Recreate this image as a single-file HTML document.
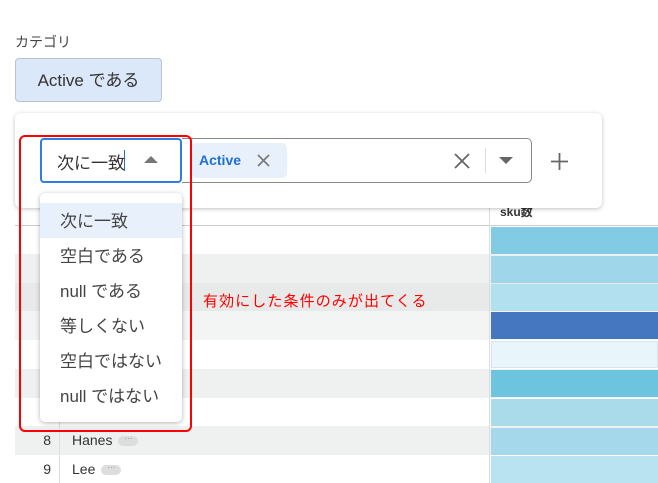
<!DOCTYPE html>
<html><head><meta charset="utf-8">
<style>
*{box-sizing:border-box;margin:0;padding:0}
body{width:658px;height:483px;overflow:hidden;background:#fff;font-family:"Liberation Sans","Noto Sans CJK JP",sans-serif;color:#333;position:relative}
.a{position:absolute}
.row{position:absolute;left:15px;width:643px;height:29px}
.bar{position:absolute;left:491px;width:167px;height:27px}
.num{position:absolute;left:15px;width:36px;text-align:right;font-size:14px;color:#333}
.nm{position:absolute;left:72px;font-size:14px;color:#333}
.pill{display:inline-block;width:20px;height:10px;border-radius:5px;background:#ddd;vertical-align:middle;margin-left:6px;font-size:8px;line-height:6px;text-align:center;color:#888}
.item{position:absolute;left:60px;font-size:17px;color:#444}
</style></head><body>
<div class="a" style="left:15px;top:32px;font-size:14px;color:#444">カテゴリ</div>
<div class="a" style="left:15px;top:58px;width:147px;height:44px;background:#dbe8fa;border:1px solid #b7c3d3;border-radius:4px;font-size:17px;color:#333;line-height:44px;text-align:center">Active である</div>

<!-- table -->
<div class="a" style="left:15px;top:200px;width:643px;height:26px;border-bottom:1px solid #ccc"></div>
<div class="a" style="left:500px;top:203px;font-size:12px;color:#333;font-weight:bold">sku数</div>
<div class="row" style="top:254px;background:#eff0f0"></div>
<div class="row" style="top:283px;background:#e8e9e9"></div>
<div class="row" style="top:311px;background:#f3f4f4"></div>
<div class="row" style="top:369px;background:#eff0f0"></div>
<div class="row" style="top:426px;background:#eff0f0"></div>
<div class="a" style="left:59px;top:226px;width:1px;height:257px;background:#ddd"></div>
<div class="a" style="left:489px;top:200px;width:1px;height:283px;background:#ddd"></div>
<div class="bar" style="top:227px;background:#82cbe4"></div>
<div class="bar" style="top:256px;background:#9fd6e9"></div>
<div class="bar" style="top:284px;background:#b2e0ee"></div>
<div class="bar" style="top:312px;background:#4477c0"></div>
<div class="bar" style="top:341px;background:#e8f5fb;border:1px solid #d5e6ee"></div>
<div class="bar" style="top:370px;background:#6cc4de"></div>
<div class="bar" style="top:399px;background:#aadbeb"></div>
<div class="bar" style="top:428px;background:#a4d8ea"></div>
<div class="bar" style="top:456px;background:#b9e3f0;height:27px"></div>
<div class="num" style="top:432px">8</div>
<div class="nm" style="top:432px">Hanes<span class="pill">···</span></div>
<div class="num" style="top:461px">9</div>
<div class="nm" style="top:461px">Lee<span class="pill">···</span></div>

<div class="a" style="left:203px;top:290px;font-size:15px;color:#f00;letter-spacing:1.1px">有効にした条件のみが出てくる</div>

<!-- popup -->
<div class="a" style="left:15px;top:113px;width:587px;height:95px;background:#fff;border-radius:6px;box-shadow:0 1px 4px rgba(0,0,0,.25)"></div>
<div class="a" style="left:182px;top:138px;width:350px;height:45px;border:1px solid #888;border-left:none;border-radius:0 5px 5px 0"></div>
<div class="a" style="left:191px;top:143px;width:96px;height:35px;background:#e8f0fc;border-radius:5px"></div>
<div class="a" style="left:199px;top:152px;font-size:14px;font-weight:bold;color:#1f6fd1">Active</div>
<svg class="a" style="left:257px;top:154px" width="13" height="13"><path d="M1 1L12 12M12 1L1 12" stroke="#777" stroke-width="1.6"/></svg>
<svg class="a" style="left:454px;top:153px" width="16" height="16"><path d="M1 1L15 15M15 1L1 15" stroke="#666" stroke-width="1.8"/></svg>
<div class="a" style="left:485px;top:148px;width:1px;height:25px;background:#ddd"></div>
<svg class="a" style="left:499px;top:157px" width="14" height="7"><path d="M0 0H14L7 7Z" fill="#666"/></svg>
<svg class="a" style="left:551px;top:153px" width="17" height="17"><path d="M8.5 0V17M0 8.5H17" stroke="#666" stroke-width="1.8"/></svg>

<div class="a" style="left:40px;top:138px;width:142px;height:45px;border:2px solid #2f7de1;border-radius:4px;background:#fff"></div>
<div class="a" style="left:57px;top:149px;font-size:17px;color:#333">次に一致</div>
<div class="a" style="left:124px;top:150px;width:1px;height:21px;background:#1f6fd1"></div>
<svg class="a" style="left:144px;top:156px" width="14" height="7"><path d="M0 7H14L7 0Z" fill="#777"/></svg>

<!-- dropdown -->
<div class="a" style="left:40px;top:193px;width:142px;height:229px;background:#fff;border-radius:5px;box-shadow:0 1px 5px rgba(0,0,0,.3)"></div>
<div class="a" style="left:40px;top:203px;width:142px;height:35px;background:#e8f0fb"></div>
<div class="item" style="top:207px">次に一致</div>
<div class="item" style="top:242px">空白である</div>
<div class="item" style="top:277px">null である</div>
<div class="item" style="top:312px">等しくない</div>
<div class="item" style="top:347px">空白ではない</div>
<div class="item" style="top:382px">null ではない</div>

<div class="a" style="left:19px;top:135px;width:173px;height:297px;border:2px solid #f00;border-radius:6px"></div>
</body></html>
